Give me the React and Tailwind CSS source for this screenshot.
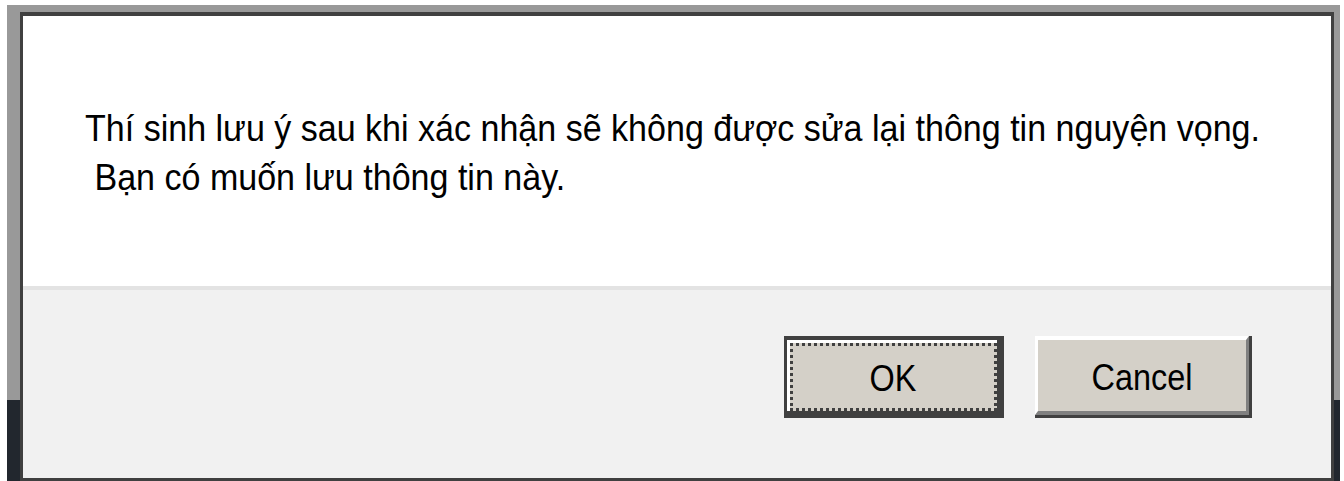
import React from 'react';

const font = { fontFamily: '"Liberation Sans", Arial, sans-serif' };

// Square focus dots drawn along all four edges of the default button face
const focusDots =
  '[background-image:linear-gradient(to_right,#404040_50%,transparent_0),linear-gradient(to_right,#404040_50%,transparent_0),linear-gradient(to_bottom,#404040_50%,transparent_0),linear-gradient(to_bottom,#404040_50%,transparent_0)] ' +
  '[background-size:6px_3px,6px_3px,3px_6px,3px_6px] ' +
  '[background-position:0_0,0_100%,0_0,100%_0] ' +
  '[background-repeat:repeat-x,repeat-x,repeat-y,repeat-y]';

// Classic 3D push button; the default one carries the black frame and focus dots
const DialogButton = ({ label, isDefault }) => {
  if (isDefault) {
    return (
      <button className="w-[220px] h-[82px] border-[#404040] border-t-4 border-l-[3px] border-r-[7px] border-b-[7px] bg-white pt-[3px] pl-[3px]">
        <div className={`h-full w-full bg-[#d4d0c8] flex items-center justify-center ${focusDots}`}>
          <span className="text-[36px] leading-none text-black scale-x-90 mt-[4px]">{label}</span>
        </div>
      </button>
    );
  }
  return (
    <button className="w-[217px] h-[82px] border-[#404040] border-r-[3px] border-b-[3px]">
      <div className="h-full w-full bg-[#d4d0c8] border-t-4 border-l-[3px] border-white border-r-[3px] border-b-4 border-r-[#808080] border-b-[#808080] flex items-center justify-center">
        <span className="text-[36px] leading-none text-black scale-x-90 mt-[4px]">{label}</span>
      </div>
    </button>
  );
};

const ConfirmDialog = () => (
  <div className="flex-1 flex flex-col border-[#404040] border-t-4 border-l-[3px] border-r-[3px] border-b-[3px]">
    <div className="h-[270px] bg-white pl-[62px] pt-[88px]">
      <p className="text-[37px] leading-[49px] text-black whitespace-pre origin-left scale-x-[0.92]">
        {'Thí sinh lưu ý sau khi xác nhận sẽ không được sửa lại thông tin nguyện vọng.\n Bạn có muốn lưu thông tin này.'}
      </p>
    </div>
    <div className="h-[4px] bg-[#e3e3e3]" />
    <div className="flex-1 bg-[#f1f1f1] flex justify-end items-start gap-[31px] pt-[46px] pr-[79px]">
      <DialogButton label="OK" isDefault />
      <DialogButton label="Cancel" />
    </div>
  </div>
);

export default function App() {
  return (
    <div className="w-[1344px] h-[481px] bg-white pt-[5px] pl-[7px] pr-[4px] overflow-hidden" style={font}>
      <div className="h-full flex flex-col pt-[7px] pl-[13px] pr-[6px] bg-[linear-gradient(to_bottom,#999999_395px,#22272e_395px)]">
        <ConfirmDialog />
      </div>
    </div>
  );
}
